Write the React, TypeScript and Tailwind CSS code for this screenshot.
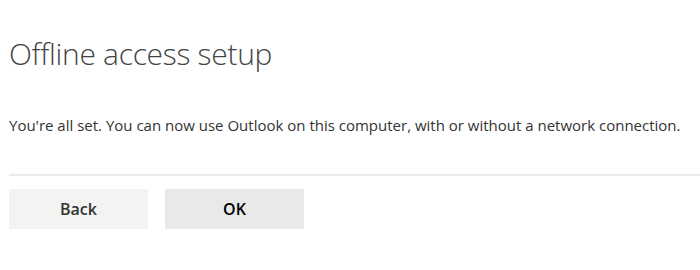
export default function App() {
  return (
    <div className="w-[700px] h-[270px] bg-white pl-[9px] pt-[34px] font-['Open_Sans',sans-serif]">
      <h1 className="text-[30px] font-light leading-[40px] text-[#444444] tracking-[-0.3px]">Offline access setup</h1>
      <p className="mt-[41px] text-[15px] leading-[20px] text-[#333333]">
        You're all set. You can now use Outlook on this computer, with or without a network connection.
      </p>
      <div className="mt-[39px] h-[2px] bg-[#ebebeb]" />
      <div className="mt-[13px] flex gap-[17px]">
        <button className="w-[139px] h-[40px] bg-[#f3f3f3] text-[16px] font-semibold text-[#333333]">Back</button>
        <button className="w-[139px] h-[40px] bg-[#e9e9e9] text-[16px] font-semibold text-black">OK</button>
      </div>
    </div>
  );
}
